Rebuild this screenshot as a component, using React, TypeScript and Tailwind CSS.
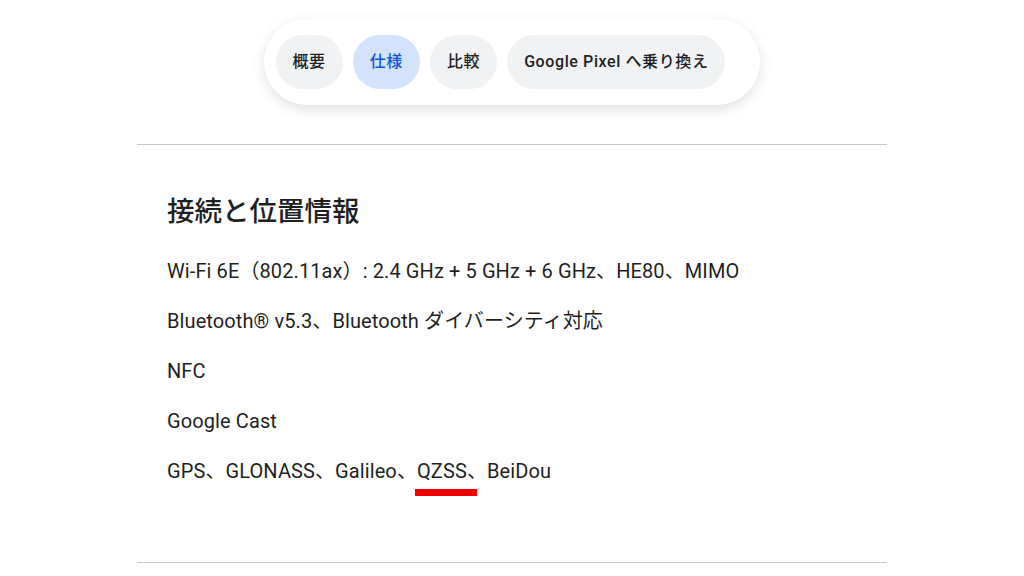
import React from 'react';

const tabs = [
  { label: '概要', active: false },
  { label: '仕様', active: true },
  { label: '比較', active: false },
  { label: 'Google Pixel へ乗り換え', active: false },
];

export default function App() {
  return (
    <div
      className="w-full h-[576px] bg-white overflow-hidden text-[#1f1f1f]"
      style={{ fontFamily: 'Roboto, "Noto Sans CJK JP", sans-serif' }}
    >
      <nav className="flex justify-center pt-[19px]">
        <div className="flex items-center gap-[10px] bg-white rounded-full pl-3 pr-[35px] py-4 shadow-[0_4px_14px_rgba(0,0,0,0.12)]">
          {tabs.map((t) => (
            <button
              key={t.label}
              className={
                'h-[54px] px-[17px] rounded-full text-[16px] font-medium tracking-[0.6px] ' +
                (t.active ? 'bg-[#d3e3fd] text-[#0b57d0]' : 'bg-[#f0f2f3] text-[#1f1f1f]')
              }
            >
              {t.label}
            </button>
          ))}
        </div>
      </nav>

      <section className="w-[750px] mx-auto mt-[39px] border-t border-b border-[#c7c7c7] pl-[30px] pt-[49px] pb-[77px]">
        <h2 className="text-[27.5px] leading-[36px] font-medium">接続と位置情報</h2>
        <div className="mt-[27px] flex flex-col gap-[22px] text-[20px] leading-[28px] tracking-[0.1px]">
          <p>Wi-Fi 6E（802.11ax）: 2.4 GHz + 5 GHz + 6 GHz、HE80、MIMO</p>
          <p>Bluetooth® v5.3、Bluetooth ダイバーシティ対応</p>
          <p>NFC</p>
          <p>Google Cast</p>
          <p>
            GPS、GLONASS、Galileo、
            <span className="relative">
              QZSS
              <span className="absolute left-[-2px] right-[-10px] top-[30px] h-[7px] bg-[#f00000]" />
            </span>
            、BeiDou
          </p>
        </div>
      </section>
    </div>
  );
}
